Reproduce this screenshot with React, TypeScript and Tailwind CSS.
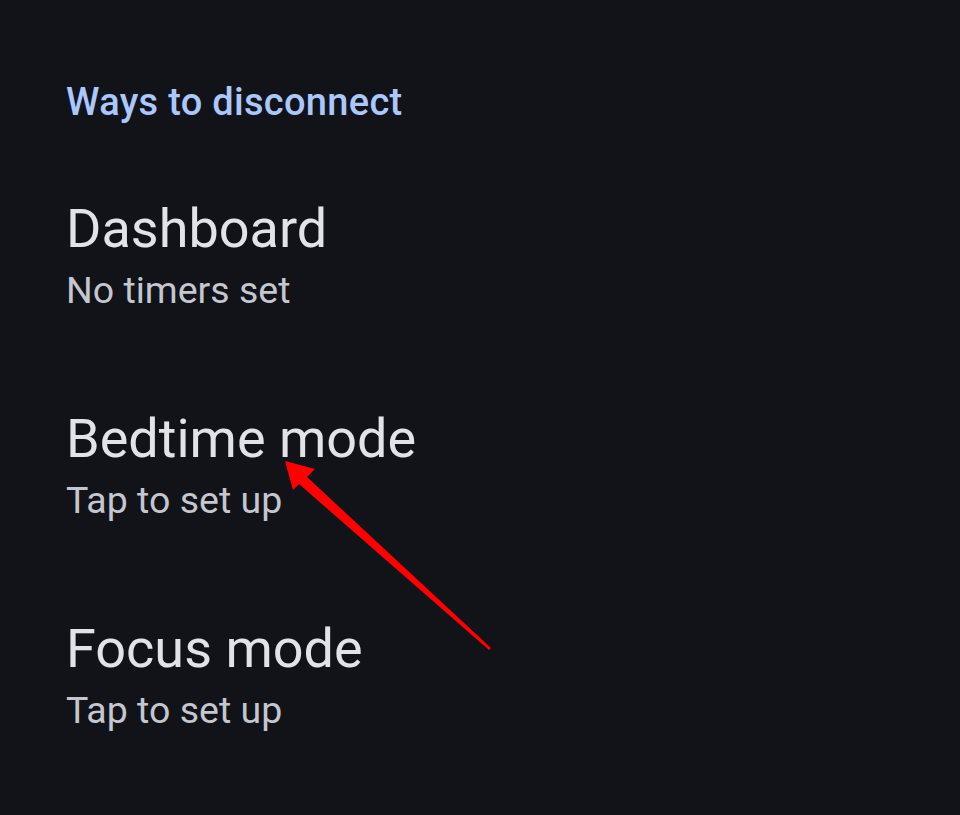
import React from "react";

const items = [
  { title: "Dashboard", sub: "No timers set" },
  { title: "Bedtime mode", sub: "Tap to set up" },
  { title: "Focus mode", sub: "Tap to set up" },
];

export default function App() {
  return (
    <div
      className="relative w-[960px] h-[815px] bg-[#111318] overflow-hidden"
      style={{ fontFamily: "Roboto, 'Noto Sans', sans-serif" }}
    >
      <div className="flex flex-col pl-[66px] pt-[80px]">
        <div className="text-[38px] leading-[44px] font-medium text-[#aac7ff] tracking-[0.3px]">
          Ways to disconnect
        </div>
        <div className="flex flex-col mt-[75px] gap-[97px]">
          {items.map((it) => (
            <div key={it.title} className="flex flex-col">
              <div className="text-[54px] leading-[60px] text-[#e2e2e9]">{it.title}</div>
              <div className="text-[37.5px] leading-[44px] text-[#c4c6d0] mt-[9px]">{it.sub}</div>
            </div>
          ))}
        </div>
      </div>
      <svg className="absolute left-0 top-0" width="960" height="815" viewBox="0 0 960 815">
        <polygon points="285,461 315,469 307,477 491,648 489,650 299,484 293,490" fill="#ff0000" />
      </svg>
    </div>
  );
}
